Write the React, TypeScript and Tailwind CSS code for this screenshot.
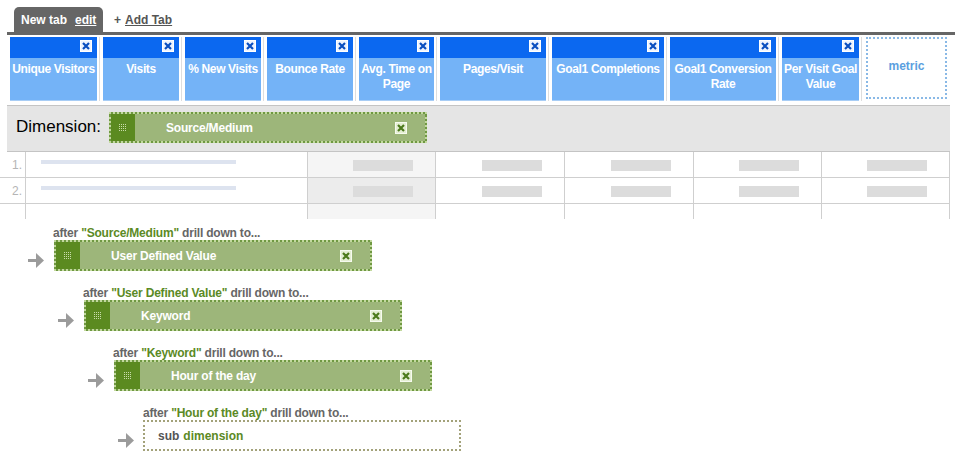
import React from "react";

const metrics = [
    { label: "Unique Visitors", w: "w-[87px]" },
    { label: "Visits", w: "w-[76px]" },
    { label: "% New Visits", w: "w-[76px]" },
    { label: "Bounce Rate", w: "w-[86px]" },
    { label: "Avg. Time on Page", w: "w-[75px]" },
    { label: "Pages/Visit", w: "w-[106px]" },
    { label: "Goal1 Completions", w: "w-[112px]" },
    { label: "Goal1 Conversion Rate", w: "w-[106px]" },
    { label: "Per Visit Goal Value", w: "w-[77px]" },
];

const drills = [
    { after: "Source/Medium", name: "User Defined Value", pl: "pl-[28px]" },
    { after: "User Defined Value", name: "Keyword", pl: "pl-[58px]" },
    { after: "Keyword", name: "Hour of the day", pl: "pl-[88px]" },
];

const BlueX = () => (
    <svg width="12" height="12" viewBox="0 0 12 12">
        <rect x="0.5" y="0.5" width="11" height="11" fill="#eef4ff" stroke="#ffffff" />
        <path d="M3 3 L9 9 M9 3 L3 9" stroke="#0a4fc0" strokeWidth="2.2" />
    </svg>
);

const GreenX = () => (
    <svg width="12" height="12" viewBox="0 0 12 12">
        <rect x="0.5" y="0.5" width="11" height="11" fill="#e4eed3" stroke="#f6faef" />
        <path d="M3 3 L9 9 M9 3 L3 9" stroke="#4c7a1c" strokeWidth="2.2" />
    </svg>
);

const Grip = () => (
    <svg width="8" height="8" viewBox="0 0 8 8">
        {[0, 2, 4, 6].map(y =>
            [0, 2, 4, 6].map(x => <rect key={`${x}-${y}`} x={x} y={y} width="1" height="1" fill="#c9dcaa" />)
        )}
    </svg>
);

const Arrow = () => (
    <svg width="17" height="17" viewBox="0 0 17 17">
        <rect x="0" y="7" width="9" height="3" fill="#9b9b9b" />
        <path d="M8 1 L16 8.5 L8 16 Z" fill="#9b9b9b" />
    </svg>
);

const Pill = ({ label }: { label: string }) => (
    <div className="flex h-[31px] w-[318px] border-2 border-dotted border-[#c3d99f] bg-[#6f9842]">
        <div className="flex w-[24px] items-center justify-center bg-[#5b8a20]">
            <Grip />
        </div>
        <div className="flex flex-1 items-center bg-[#9db67a] pl-[31px] pr-[18px]">
            <span className="flex-1 text-[12px] font-bold tracking-[-0.2px] text-white">{label}</span>
            <GreenX />
        </div>
    </div>
);

const AfterLine = ({ name }: { name: string }) => (
    <div className="ml-[25px] h-[14px] text-[12px] font-bold leading-[14px] tracking-[-0.2px] text-[#666]">
        after <span className="text-[#5b8a25]">"{name}"</span> drill down to...
    </div>
);

export default function App() {
    return (
        <div className="h-[458px] w-[955px] overflow-hidden bg-white font-['Liberation_Sans',Arial,sans-serif]">
            <div className="flex h-[32px] items-end pl-[14px]">
                <div className="flex h-[25px] w-[89px] items-center rounded-t-[5px] bg-[#666] pl-[7px] text-[12px] font-bold text-white">
                    New tab
                    <span className="ml-[8px] underline">edit</span>
                </div>
                <div className="ml-[11px] flex h-[25px] items-center text-[12px] font-bold text-[#555]">
                    + <span className="ml-[4px] underline">Add Tab</span>
                </div>
            </div>

            <div className="ml-[7px] border-t-[3px] border-[#666]">
                <div className="flex pb-[4px] pt-[2px]">
                    {metrics.map(m => (
                        <div key={m.label} className="border-r border-[#dedede] pl-[3px] pr-[2px]">
                            <div className={`${m.w} h-[64px] border-b border-[#a8cdf5]`}>
                                <div className="flex h-[21px] items-start justify-end bg-[#0b68f0] pr-[5px] pt-[3px]">
                                    <BlueX />
                                </div>
                                <div className="h-[42px] bg-[#74b3f7] pt-[4px] text-center text-[12px] font-bold leading-[15px] tracking-[-0.35px] text-white">
                                    {m.label}
                                </div>
                            </div>
                        </div>
                    ))}
                    <div className="ml-[4px] h-[62px] w-[81px] border-2 border-dotted border-[#8ab9e6] pt-[18px] text-center text-[12px] font-bold text-[#5b9fe0]">
                        metric
                    </div>
                </div>

                <div className="flex h-[47px] w-[943px] items-start border-y border-[#c4c4c4] bg-[#e5e5e5] pt-[6px]">
                    <span className="w-[102px] pl-[9px] pt-[5px] text-[17px] leading-[20px] text-black">Dimension:</span>
                    <Pill label="Source/Medium" />
                </div>
            </div>

            <div className="grid w-[950px] grid-cols-[26px_282px_128px_129px_129px_128px_128px]">
                {[1, 2, 3].map(r => {
                    const last = r === 3;
                    const h = last ? "h-[15px]" : "h-[26px] border-b";
                    return (
                        <React.Fragment key={r}>
                            <div className={`${h} border-r border-[#cfcfcf] pr-[3px] pt-[7px] text-right text-[12px] leading-[13px] text-[#b5b5b5]`}>
                                {last ? "" : `${r}.`}
                            </div>
                            <div className={`${h} border-r border-[#cfcfcf] pl-[15px] pt-[8px]`}>
                                {!last && <div className="h-[4px] w-[195px] bg-[#dde3ef]" />}
                            </div>
                            {[0, 1, 2, 3, 4].map(c => (
                                <div
                                    key={c}
                                    className={`${h} flex justify-end border-r border-[#cfcfcf] pr-[22px] pt-[8px] ${c === 0 ? (r === 2 ? "bg-[#ececec]" : "bg-[#f5f5f5]") : ""}`}
                                >
                                    {!last && <div className="h-[11px] w-[60px] bg-[#dcdcdc]" />}
                                </div>
                            ))}
                        </React.Fragment>
                    );
                })}
            </div>

            <div className="mt-[7px] flex flex-col gap-[15px]">
                {drills.map(d => (
                    <div key={d.name} className={d.pl}>
                        <AfterLine name={d.after} />
                        <div className="flex items-start">
                            <div className="mt-[12px]">
                                <Arrow />
                            </div>
                            <div className="ml-[9px]">
                                <Pill label={d.name} />
                            </div>
                        </div>
                    </div>
                ))}
                <div className="pl-[118px]">
                    <AfterLine name="Hour of the day" />
                    <div className="flex items-start">
                        <div className="mt-[12px]">
                            <Arrow />
                        </div>
                        <div className="ml-[8px] flex h-[31px] w-[318px] items-center border-2 border-dotted border-[#a3a27a] pl-[13px] text-[12px] font-bold text-[#555]">
                            sub <span className="ml-[4px] text-[#5b8a25]">dimension</span>
                        </div>
                    </div>
                </div>
            </div>
        </div>
    );
}
